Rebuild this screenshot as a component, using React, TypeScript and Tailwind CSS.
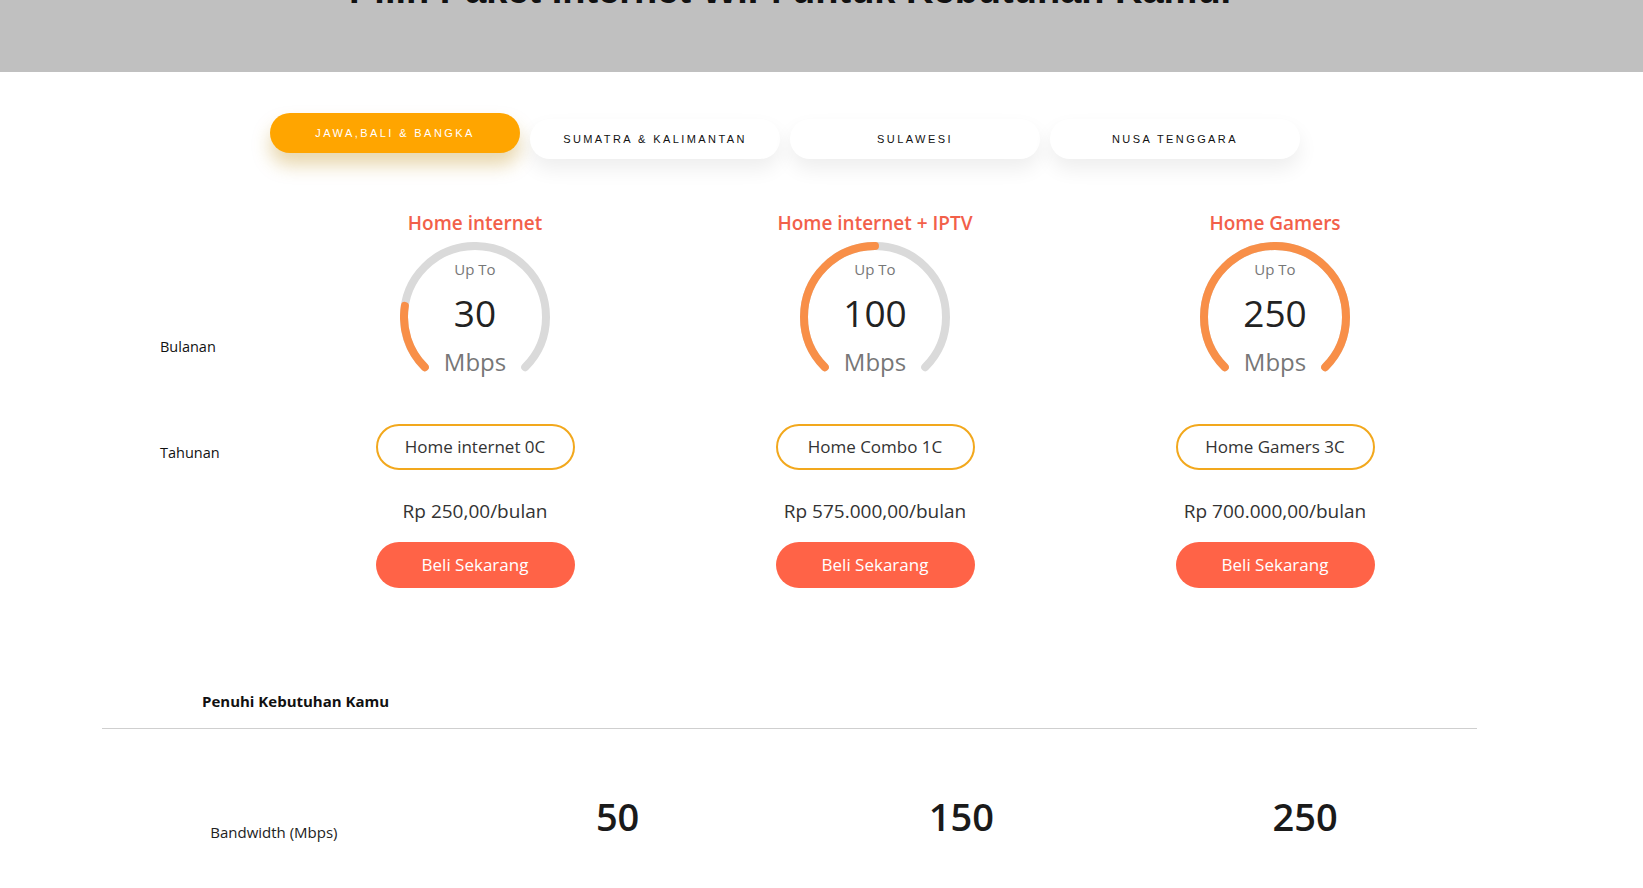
import React from "react";

const tabs = ["JAWA,BALI & BANGKA", "SUMATRA & KALIMANTAN", "SULAWESI", "NUSA TENGGARA"];

const plans = [
  { title: "Home internet", speed: "30", fill: 0.2, name: "Home internet 0C", price: "Rp 250,00/bulan" },
  { title: "Home internet + IPTV", speed: "100", fill: 0.5, name: "Home Combo 1C", price: "Rp 575.000,00/bulan" },
  { title: "Home Gamers", speed: "250", fill: 1, name: "Home Gamers 3C", price: "Rp 700.000,00/bulan" },
];

// 270 degree arc, starting bottom-left, going clockwise to bottom-right
const ARC = "M 24.8 125.2 A 71 71 0 1 1 125.2 125.2";

function Gauge({ speed, fill }: { speed: string; fill: number }) {
  return (
    <div className="relative w-[150px] h-[150px] mt-[6px]">
      <svg width="150" height="150" viewBox="0 0 150 150" className="block">
        <path d={ARC} fill="none" stroke="#dadada" strokeWidth="8" strokeLinecap="round" pathLength={100} />
        <path
          d={ARC}
          fill="none"
          stroke="#f88f48"
          strokeWidth="8"
          strokeLinecap="round"
          pathLength={100}
          strokeDasharray={`${fill * 100} 200`}
        />
      </svg>
      <div className="absolute inset-0 flex flex-col items-center">
        <div className="mt-[16px] text-[15px] leading-[22px] text-[#777]">Up To</div>
        <div className="mt-[10px] text-[37px] leading-[46px] text-[#222]">{speed}</div>
        <div className="mt-[10px] text-[24px] leading-[32px] text-[#777]">Mbps</div>
      </div>
    </div>
  );
}

export default function App() {
  return (
    <div className="min-h-screen bg-white font-['Open_Sans','Noto_Sans',sans-serif] text-[#222]">
      {/* Top banner, heading scrolled mostly out of view */}
      <div className="h-[72px] bg-[#c0c0c0] overflow-hidden">
        <h1 className="mt-[-29px] pl-[349px] text-[38px] leading-none font-bold text-[#111] font-['Liberation_Sans',Arial,sans-serif] whitespace-nowrap">
          Pilih Paket Internet WiFi untuk Kebutuhan Kamu.
        </h1>
      </div>

      {/* Region tabs */}
      <div className="mt-[41px] pl-[270px] flex items-start gap-[10px]">
        {tabs.map((t, i) => (
          <button
            key={t}
            className={
              i === 0
                ? "w-[250px] h-[40px] rounded-full bg-[#ffa500] text-white text-[11px] font-normal tracking-[0.22em] font-['Liberation_Sans',Arial,sans-serif] shadow-[0_12px_18px_rgba(190,140,20,0.35)]"
                : "mt-[6px] w-[250px] h-[40px] rounded-full bg-white text-[#111] text-[11px] font-normal tracking-[0.22em] font-['Liberation_Sans',Arial,sans-serif] shadow-[0_10px_20px_rgba(0,0,0,0.07)]"
            }
          >
            {t}
          </button>
        ))}
      </div>

      {/* Plans */}
      <div className="mt-[51px] pl-[160px] flex">
        <div className="w-[115px] text-[14.5px] leading-[20px] text-[#111]">
          <div className="mt-[127px]">Bulanan</div>
          <div className="mt-[86px]">Tahunan</div>
        </div>
        {plans.map((p) => (
          <div key={p.title} className="w-[400px] flex flex-col items-center">
            <div className="text-[19px] leading-[26px] font-semibold text-[#f2604a]">{p.title}</div>
            <Gauge speed={p.speed} fill={p.fill} />
            <div className="mt-[32px] w-[199px] h-[46px] rounded-full border-2 border-[#f2a81d] flex items-center justify-center text-[17px] text-[#333]">
              {p.name}
            </div>
            <div className="mt-[28px] text-[19px] leading-[26px] text-[#333]">{p.price}</div>
            <button className="mt-[18px] w-[199px] h-[46px] rounded-full bg-[#ff6347] text-white text-[17px]">
              Beli Sekarang
            </button>
          </div>
        ))}
      </div>

      {/* Comparison table */}
      <div className="mt-[103px] ml-[102px] w-[1375px]">
        <div className="pl-[100px] pb-[17px] text-[15px] leading-[20px] font-bold text-[#111]">
          Penuhi Kebutuhan Kamu
        </div>
        <div className="border-t border-[#cfcfcf]" />
        <div className="mt-[61px] grid grid-cols-4 items-end">
          <div className="text-center text-[15px] leading-[20px] text-[#222]">Bandwidth (Mbps)</div>
          <div className="text-center text-[38px] leading-[52px] font-semibold text-[#1a1a1a]">50</div>
          <div className="text-center text-[38px] leading-[52px] font-semibold text-[#1a1a1a]">150</div>
          <div className="text-center text-[38px] leading-[52px] font-semibold text-[#1a1a1a]">250</div>
        </div>
      </div>
    </div>
  );
}
